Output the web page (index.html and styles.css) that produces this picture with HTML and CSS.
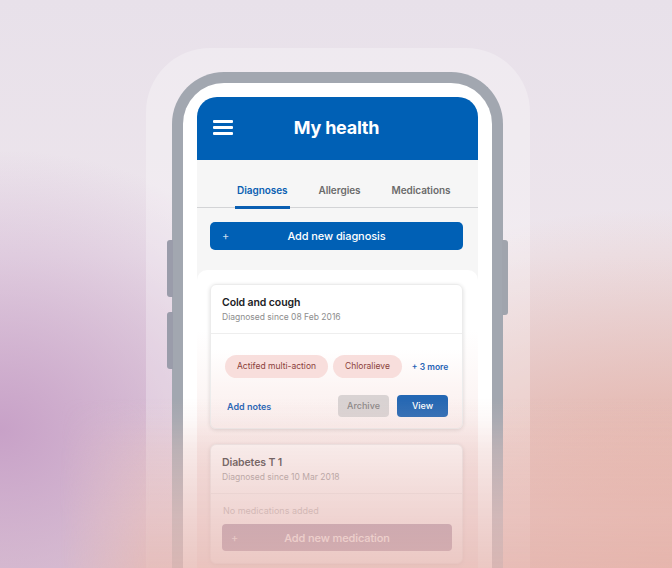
FILE: index.html
```html
<!DOCTYPE html>
<html lang="en">
<head>
<meta charset="utf-8">
<title>My health</title>
<link rel="stylesheet" href="styles.css">
</head>
<body>
<div class="stage">
  <div class="halo">
    <div class="frame">
      <span class="side-btn left b1"></span>
      <span class="side-btn left b2"></span>
      <span class="side-btn right b3"></span>
      <div class="screen">
        <header class="appbar">
          <span class="burger"><i></i><i></i><i></i></span>
          <h1 class="title">My health</h1>
          <span></span>
        </header>
        <nav class="tabs">
          <span class="tab active">Diagnoses</span>
          <span class="tab">Allergies</span>
          <span class="tab">Medications</span>
        </nav>
        <div class="primary-btn"><span class="plus">+</span><span class="label">Add new diagnosis</span><span></span></div>
        <div class="panel">
          <div class="card first">
            <div class="card-head">
              <div class="card-title">Cold and cough</div>
              <div class="card-sub">Diagnosed since 08 Feb 2016</div>
            </div>
            <div class="card-body">
              <div class="chips">
                <span class="chip">Actifed multi-action</span>
                <span class="chip">Chloralieve</span>
                <span class="more">+ 3 more</span>
              </div>
              <div class="actions">
                <span class="link">Add notes</span>
                <span class="btn archive">Archive</span>
                <span class="btn view">View</span>
              </div>
            </div>
          </div>
          <div class="card second">
            <div class="card-head">
              <div class="card-title">Diabetes T 1</div>
              <div class="card-sub">Diagnosed since 10 Mar 2018</div>
            </div>
            <div class="card-body2">
              <div class="empty">No medications added</div>
              <div class="secondary-btn"><span class="plus">+</span><span class="label">Add new medication</span><span></span></div>
            </div>
          </div>
        </div>
      </div>
    </div>
  </div>
</div>
<div class="fade"></div>
</body>
</html>
```

FILE: styles.css
```css
* { box-sizing: border-box; margin: 0; padding: 0; }
html, body { width: 672px; height: 568px; overflow: hidden; }
body {
  font-family: Inter, "Liberation Sans", Arial, sans-serif;
  background:
    radial-gradient(ellipse 340px 280px at 0px 430px, rgba(198,158,198,0.95), rgba(198,158,198,0) 100%),
    radial-gradient(ellipse 520px 360px at 672px 568px, rgba(228,164,146,1), rgba(228,164,146,0) 100%),
    linear-gradient(180deg, #e8e1ea 0%, #ede5ec 45%, #e2d0d8 100%);
  position: relative;
}
.stage { display: flex; padding: 48px 0 0 146px; }
.halo {
  width: 384px; height: 560px;
  border-radius: 64px 64px 0 0;
  background: rgba(255,255,255,0.28);
  padding: 24px 27px 0 26px;
}
.frame {
  position: relative;
  width: 331px; height: 520px;
  border: 11px solid #a2a7b0; border-bottom: none;
  border-radius: 52px 52px 0 0;
  background: #fff;
  padding: 14px 14px 0 14px;
}
.side-btn { position: absolute; width: 6px; background: #9a9caa; }
.side-btn.left { left: -16px; border-radius: 3px 0 0 3px; }
.side-btn.right { right: -16px; border-radius: 0 3px 3px 0; background: #a0a4ad; }
.b1 { top: 157px; height: 57px; }
.b2 { top: 229px; height: 57px; }
.b3 { top: 157px; height: 75px; }
.screen {
  width: 281px; height: 520px;
  border-radius: 20px 20px 0 0;
  overflow: hidden;
  background: #f6f6f6;
}
.appbar {
  height: 63px; background: #0060b5;
  display: grid; grid-template-columns: 1fr auto 1fr; align-items: center;
  padding: 0 16px 3px;
}
.burger { display: flex; flex-direction: column; gap: 3px; width: 20px; margin-top: 1px; }
.burger i { display: block; height: 3px; background: #fff; border-radius: 1px; }
.title { color: #fff; font-size: 18px; font-weight: 700; letter-spacing: -0.25px; margin-left: -2px; }
.tabs {
  display: flex; gap: 27px; padding: 23px 0 0 38px;
  height: 48px; border-bottom: 1px solid #d3d4d6;
}
.tab { font-size: 10px; font-weight: 600; color: #6b6b6b; padding: 0 2px; height: 24px; line-height: 14px; letter-spacing: -0.05px; white-space: nowrap; }
.tab.active { color: #0a5fb2; border-bottom: 3px solid #0a5fb2; height: 26px; }
.primary-btn {
  margin: 14px 15px 0 13px; height: 28px; border-radius: 5px;
  background: #0060b5; color: #fff;
  display: grid; grid-template-columns: 1fr auto 1fr; align-items: center;
  padding: 0 12px;
}
.plus { font-size: 11px; color: rgba(255,255,255,0.8); }
.label { font-size: 11px; font-weight: 500; letter-spacing: -0.1px; white-space: nowrap; }
.panel {
  margin-top: 20px;
  background: linear-gradient(180deg, #ffffff 0px, #ffffff 60px, #fbf2f1 150px, #f7e8e7 200px);
  border-radius: 10px 10px 0 0;
  padding: 14px 15px 0 13px;
  height: 300px;
}
.card {
  border-radius: 6px; background: #fff;
  box-shadow: 0 1px 4px rgba(0,0,0,0.14);
  border: 1px solid #ececec;
}
.card.first { background: linear-gradient(180deg, #ffffff 45%, #fcf4f3 75%, #faefee 100%); }
.card-head { padding: 11px 11px 9px; border-bottom: 1px solid #eeeeee; }
.card-title { font-size: 10.5px; font-weight: 600; color: #202124; line-height: 14px; letter-spacing: -0.1px; }
.card-sub { font-size: 8.5px; color: #8d8d8d; line-height: 13px; margin-top: 1px; }
.card-body { padding: 21px 14px 11px 14px; }
.chips { display: flex; align-items: center; gap: 5px; }
.chip {
  height: 23px; border-radius: 12px; background: #f8dedc; color: #8b3f3b;
  font-size: 8.5px; line-height: 23px; padding: 0 12px; white-space: nowrap;
}
.more { font-size: 8.5px; font-weight: 600; color: #1f63b5; margin-left: 5px; white-space: nowrap; }
.actions { display: flex; align-items: center; gap: 8px; margin-top: 17px; }
.link { font-size: 9px; font-weight: 600; color: #1f63b5; margin-left: 2px; margin-right: auto; }
.btn { width: 51px; height: 22px; border-radius: 4px; font-size: 9px; font-weight: 500; line-height: 22px; text-align: center; }
.archive { background: #d9d3d3; color: #8a8686; }
.view { background: #2467b3; color: #fff; }
.card.second { margin-top: 15px; background: #fff; }
.card-body2 { padding: 10px 10px 12px 11px; }
.empty { font-size: 9px; color: #a8a8a8; line-height: 14px; padding-left: 1px; }
.secondary-btn {
  margin-top: 6px; height: 27px; border-radius: 4px;
  background: #937a98; color: #fff;
  display: grid; grid-template-columns: 1fr auto 1fr; align-items: center;
  padding: 0 9px;
}
.fade {
  position: absolute; left: 60px; top: 0; width: 612px; height: 568px; pointer-events: none;
  background:
    linear-gradient(180deg, rgba(234,196,192,0) 70%, rgba(236,200,196,0.12) 74%, rgba(234,196,192,0.36) 79%, rgba(233,194,190,0.5) 84%, rgba(232,192,188,0.68) 91%, rgba(230,186,180,0.8) 100%);
  -webkit-mask-image: linear-gradient(90deg, transparent 0px, #000 90px);
  mask-image: linear-gradient(90deg, transparent 0px, #000 90px);
}
```
